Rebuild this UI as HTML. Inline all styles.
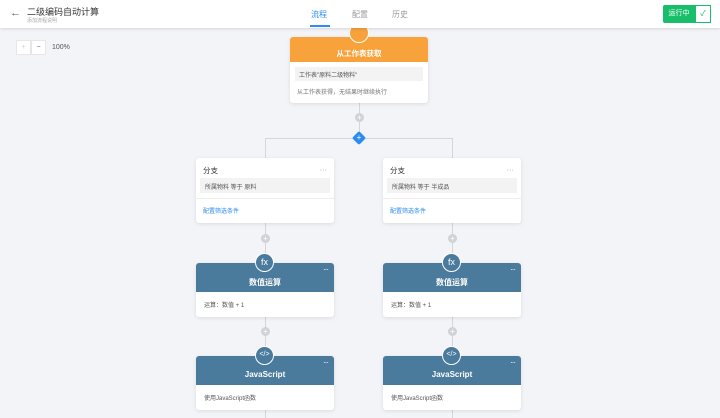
<!DOCTYPE html>
<html><head><meta charset="utf-8"><style>
*{margin:0;padding:0;box-sizing:border-box}
body{width:720px;height:418px;overflow:hidden;background:#f3f4f8;font-family:"Liberation Sans","Noto Sans CJK SC",sans-serif;position:relative;color:#333}
.a{position:absolute}
.hdr{left:0;top:0;width:720px;height:28px;background:#fff;box-shadow:0 1px 3px rgba(0,0,0,.12);z-index:5}
.card{position:absolute;background:#fff;border-radius:3px;box-shadow:0 1px 4px rgba(0,0,0,.1);width:138px}
.line{position:absolute;background:#d4d6dc}
.plus{position:absolute;width:9px;height:9px;border-radius:50%;background:#d0d2d6;color:#fff;font-size:8px;line-height:9px;text-align:center}
.bh{background:#4a7a9c;height:29px;border-radius:3px 3px 0 0;color:#fff;font-size:8px;font-weight:bold;text-align:center;padding-top:14px}
.ic{position:absolute;width:19px;height:19px;border-radius:50%;background:#4a7a9c;border:1.5px solid #fff;color:#fff;font-size:9px;text-align:center;line-height:16px}
.dots{position:absolute;right:6px;top:2px;font-size:8px;color:#fff;letter-spacing:-1px}
.body{font-size:6px;color:#555;padding:8px 8px}
</style></head><body>
<div class="a hdr">
<div class="a" style="left:10px;top:7px;font-size:11px;color:#555">←</div>
<div class="a" style="left:27px;top:5px;font-size:9px;color:#333">二级编码自动计算</div>
<div class="a" style="left:27px;top:17px;font-size:5px;color:#aaa">添加流程说明</div>
<div class="a" style="left:311px;top:9px;font-size:8px;color:#2d8cf0">流程</div>
<div class="a" style="left:310px;top:25px;width:20px;height:2px;background:#2d8cf0"></div>
<div class="a" style="left:352px;top:9px;font-size:8px;color:#999">配置</div>
<div class="a" style="left:392px;top:9px;font-size:8px;color:#999">历史</div>
<div class="a" style="left:663px;top:5px;width:32px;height:18px;background:#19be6b;border-radius:2px 0 0 2px;color:#fff;font-size:7px;line-height:18px;text-align:center">运行中</div>
<div class="a" style="left:695px;top:5px;width:16px;height:18px;background:#fff;border:1px solid #19be6b;color:#19be6b;font-size:8px;line-height:16px;text-align:center">✓</div>
</div>
<div class="a" style="left:16px;top:40px;width:15px;height:15px;background:#fff;border:1px solid #e6e6e6;color:#ccc;font-size:7px;text-align:center;line-height:13px">+</div>
<div class="a" style="left:31px;top:40px;width:15px;height:15px;background:#fff;border:1px solid #e6e6e6;color:#666;font-size:7px;text-align:center;line-height:13px">−</div>
<div class="a" style="left:52px;top:44px;font-size:7px;color:#555">100%</div>

<div class="line" style="left:359px;top:100px;width:1px;height:38px"></div>
<div class="line" style="left:265px;top:138px;width:188px;height:1px"></div>
<div class="line" style="left:265px;top:138px;width:1px;height:280px"></div>
<div class="line" style="left:452px;top:138px;width:1px;height:280px"></div>
<div class="plus" style="left:355px;top:113px">+</div>
<div class="a" style="left:354px;top:133px;width:10px;height:10px;background:#2d8cf0;transform:rotate(45deg);border-radius:2px"></div>
<div class="a" style="left:356px;top:133px;width:6px;color:#fff;font-size:8px;line-height:10px;text-align:center">+</div>

<div class="card" style="left:290px;top:37px;height:66px">
<div style="background:#f7a23b;height:25px;border-radius:3px 3px 0 0;color:#fff;font-size:7.5px;font-weight:bold;text-align:center;padding-top:11px">从工作表获取</div>
<div style="margin:5px 5px 0;background:#f3f3f3;height:14px;font-size:6px;color:#555;padding:3px 4px">工作表"原料二级物料"</div>
<div style="font-size:6px;color:#777;padding:6px 7px">从工作表获得，无结果时继续执行</div>
</div>
<div class="a" style="left:349px;top:23px;width:20px;height:20px;border-radius:50%;background:#f7a23b;border:1.5px solid #fff"></div>

<div class="card" style="left:196px;top:158px;height:65px">
<div style="font-size:7.5px;padding:7px 7px 2px">分支<span style="float:right;color:#999">···</span></div>
<div style="margin:0 4px;background:#f3f3f3;height:15px;font-size:6px;padding:4px 5px;color:#555">所属物料 等于 原料</div>
<div style="border-top:1px solid #eee;margin-top:5px;font-size:6px;color:#2d8cf0;padding:7px 7px">配置筛选条件</div>
</div>
<div class="card" style="left:383px;top:158px;height:65px">
<div style="font-size:7.5px;padding:7px 7px 2px">分支<span style="float:right;color:#999">···</span></div>
<div style="margin:0 4px;background:#f3f3f3;height:15px;font-size:6px;padding:4px 5px;color:#555">所属物料 等于 半成品</div>
<div style="border-top:1px solid #eee;margin-top:5px;font-size:6px;color:#2d8cf0;padding:7px 7px">配置筛选条件</div>
</div>

<div class="plus" style="left:261px;top:234px">+</div>
<div class="plus" style="left:448px;top:234px">+</div>
<div class="plus" style="left:261px;top:327px">+</div>
<div class="plus" style="left:448px;top:327px">+</div>

<div class="card" style="left:196px;top:263px;height:54px"><div class="bh">数值运算</div><div class="dots">···</div><div class="body">运算：数值 + 1</div></div>
<div class="card" style="left:383px;top:263px;height:54px"><div class="bh">数值运算</div><div class="dots">···</div><div class="body">运算：数值 + 1</div></div>
<div class="ic" style="left:255px;top:253px">fx</div>
<div class="ic" style="left:442px;top:253px">fx</div>

<div class="card" style="left:196px;top:356px;height:54px"><div class="bh">JavaScript</div><div class="dots">···</div><div class="body">使用JavaScript函数</div></div>
<div class="card" style="left:383px;top:356px;height:54px"><div class="bh">JavaScript</div><div class="dots">···</div><div class="body">使用JavaScript函数</div></div>
<div class="ic" style="left:255px;top:346px;font-size:7px">&lt;/&gt;</div>
<div class="ic" style="left:442px;top:346px;font-size:7px">&lt;/&gt;</div>
</body></html>
